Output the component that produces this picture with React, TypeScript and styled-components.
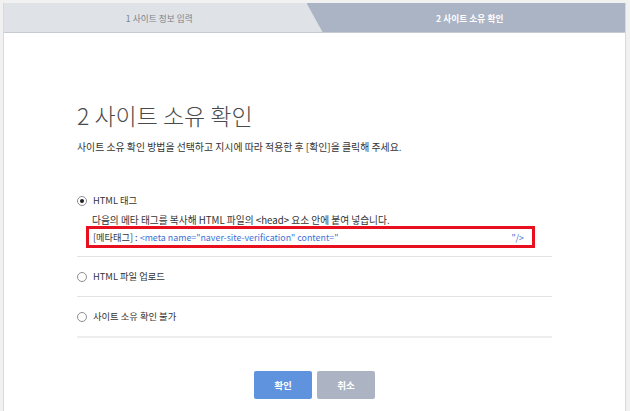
import React from "react";
import styled, { createGlobalStyle } from "styled-components";

const Global = createGlobalStyle`
  html, body { margin: 0; padding: 0; }
  body {
    background: #f1f1f1;
    font-family: "Noto Sans CJK KR", "Noto Sans", "Liberation Sans", sans-serif;
    color: #333;
  }
  * { box-sizing: border-box; }
`;

const Page = styled.div`
  padding: 3px 4px 0 3px;
  height: 411px;
  overflow: hidden;
`;

const Card = styled.div`
  background: #fff;
  border-left: 1px solid #d9d9d9;
  border-right: 1px solid #d9d9d9;
  min-height: 420px;
`;

const TabBar = styled.div`
  display: grid;
  grid-template-columns: 1fr 1fr;
  height: 30px;
  background: #dfe2e6;
  border-bottom: 1px solid #c6cad1;
`;

const Tab = styled.div<{ $active?: boolean }>`
  display: flex;
  align-items: center;
  justify-content: center;
  font-size: 8.6px;
  letter-spacing: 0.1px;
  font-weight: ${(p) => (p.$active ? 700 : 400)};
  color: ${(p) => (p.$active ? "#ffffff" : "#7d828a")};
  background: ${(p) => (p.$active ? "#abb4c5" : "transparent")};
  ${(p) =>
    p.$active
      ? `margin-left: -8px; padding-left: 8px; clip-path: polygon(0 0, 100% 0, 100% 100%, 16px 100%);`
      : ""}
`;

const Content = styled.div`
  width: 475px;
  margin: 0 auto;
  padding-top: 67px;
`;

const Title = styled.h1`
  margin: 0;
  font-size: 23px;
  line-height: 30px;
  font-weight: 300;
  color: #4a4a4a;
`;

const Lead = styled.p`
  margin: 10px 0 0;
  font-size: 9.9px;
  line-height: 14px;
  color: #333;
`;

const OptionList = styled.div`
  margin-top: 27px;
`;

const OptionRow = styled.div<{ $detail?: boolean; $last?: boolean }>`
  padding: 12px 0 ${(p) => (p.$detail ? "8px" : "12px")};
  border-bottom: ${(p) => (p.$last ? "2px solid #eeeeee" : "1px solid #e3e3e3")};
`;

const Label = styled.label`
  display: flex;
  align-items: center;
  gap: 6px;
  font-size: 9.3px;
  line-height: 15px;
  color: #333;
`;

const Radio = styled.span<{ $checked?: boolean }>`
  position: relative;
  width: 10px;
  height: 10px;
  border: 1px solid #8e8e8e;
  border-radius: 50%;
  background: #fff;
  flex: none;
  &::after {
    content: "";
    display: ${(p) => (p.$checked ? "block" : "none")};
    position: absolute;
    left: 2px;
    top: 2px;
    width: 4px;
    height: 4px;
    border-radius: 50%;
    background: #222;
  }
`;

const Detail = styled.div`
  padding: 7px 17px 0 9px;
`;

const DetailText = styled.p`
  margin: 0;
  padding-left: 6px;
  font-size: 9.7px;
  line-height: 11px;
  color: #333;
`;

const MetaBox = styled.div`
  display: flex;
  align-items: center;
  justify-content: space-between;
  height: 22px;
  border: 3px solid #e8101e;
  padding: 0 8px 0 4px;
  font-size: 9.2px;
  color: #333;
`;

const Code = styled.span`
  color: #3d6fd6;
  font-size: 8.9px;
`;

const Buttons = styled.div`
  display: flex;
  justify-content: center;
  gap: 5px;
  margin-top: 33px;
`;

const Button = styled.button<{ $primary?: boolean }>`
  width: 58px;
  height: 28px;
  border: none;
  border-radius: 2px;
  font-family: inherit;
  font-size: 9.6px;
  font-weight: 700;
  color: #fff;
  background: ${(p) => (p.$primary ? "#5f93de" : "#acb4c3")};
  padding: 0;
`;

export default function App() {
  return (
    <>
      <Global />
      <Page>
        <Card>
          <TabBar>
            <Tab>1 사이트 정보 입력</Tab>
            <Tab $active>2 사이트 소유 확인</Tab>
          </TabBar>
          <Content>
            <Title>2 사이트 소유 확인</Title>
            <Lead>사이트 소유 확인 방법을 선택하고 지시에 따라 적용한 후 [확인]을 클릭해 주세요.</Lead>
            <OptionList>
              <OptionRow $detail>
                <Label>
                  <Radio $checked />
                  HTML 태그
                </Label>
                <Detail>
                  <DetailText>
                    다음의 메타 태그를 복사해 HTML 파일의 &lt;head&gt; 요소 안에 붙여 넣습니다.
                  </DetailText>
                  <MetaBox>
                    <span>
                      [메타태그] : <Code>&lt;meta name="naver-site-verification" content="</Code>
                    </span>
                    <Code>"/&gt;</Code>
                  </MetaBox>
                </Detail>
              </OptionRow>
              <OptionRow>
                <Label>
                  <Radio />
                  HTML 파일 업로드
                </Label>
              </OptionRow>
              <OptionRow $last>
                <Label>
                  <Radio />
                  사이트 소유 확인 불가
                </Label>
              </OptionRow>
            </OptionList>
            <Buttons>
              <Button $primary>확인</Button>
              <Button>취소</Button>
            </Buttons>
          </Content>
        </Card>
      </Page>
    </>
  );
}
